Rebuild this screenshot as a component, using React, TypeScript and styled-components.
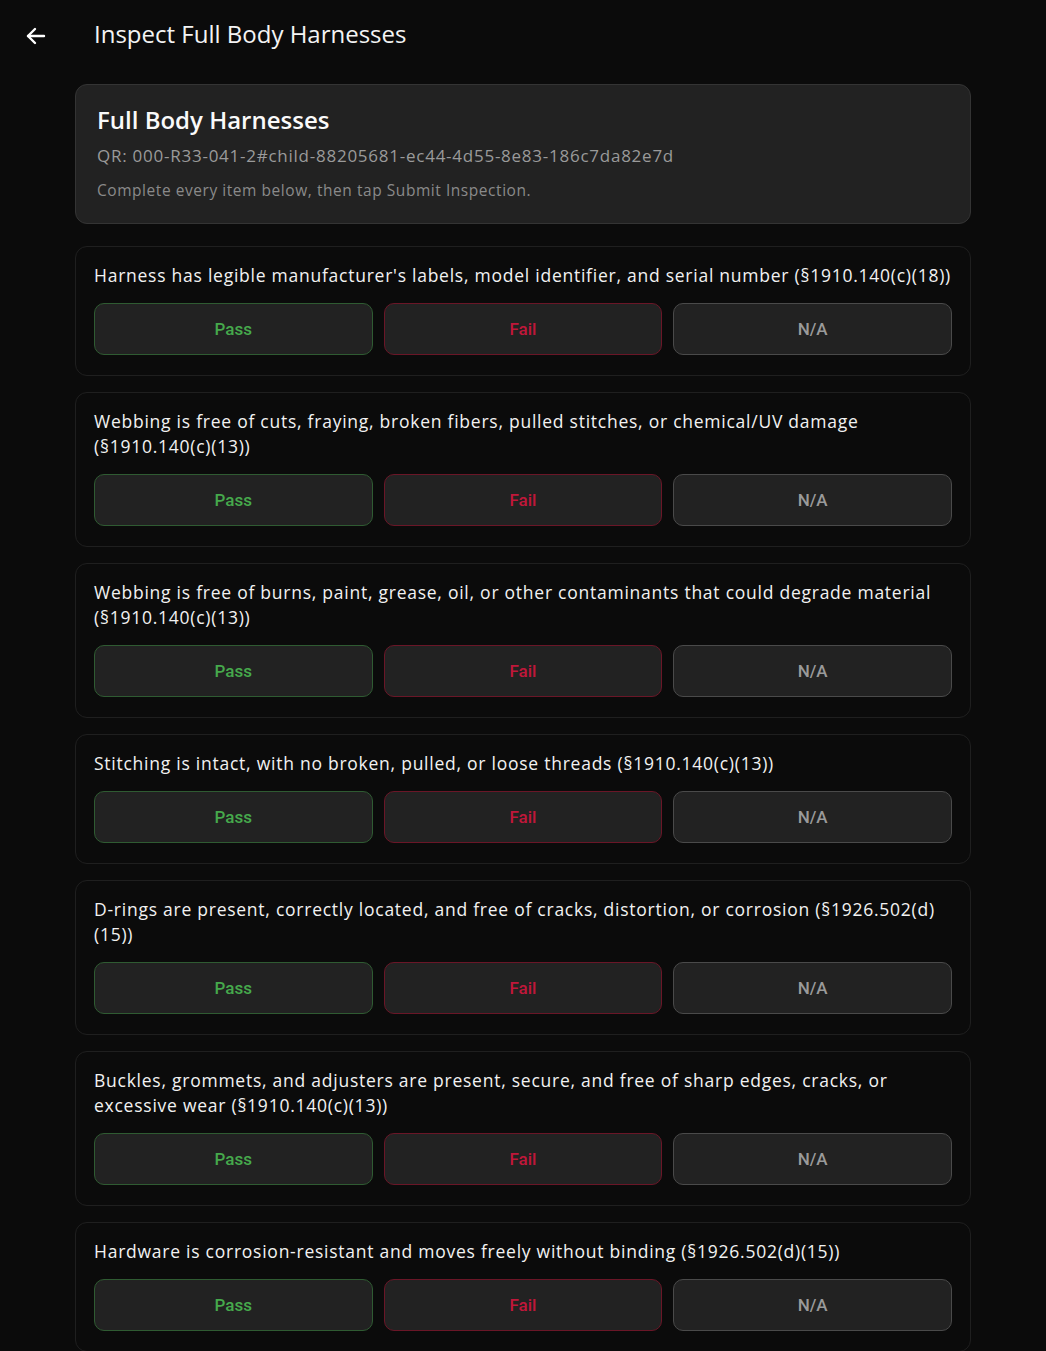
import React, { useState } from "react";
import styled, { createGlobalStyle } from "styled-components";

const GlobalStyle = createGlobalStyle`
  html, body {
    margin: 0;
    padding: 0;
    background: #0b0b0b;
  }
  body {
    font-family: "Open Sans", "Noto Sans", sans-serif;
    color: #f2f2f2;
  }
`;

type Answer = "pass" | "fail" | "na" | null;

const items = [
  "Harness has legible manufacturer's labels, model identifier, and serial number (§1910.140(c)(18))",
  "Webbing is free of cuts, fraying, broken fibers, pulled stitches, or chemical/UV damage (§1910.140(c)(13))",
  "Webbing is free of burns, paint, grease, oil, or other contaminants that could degrade material (§1910.140(c)(13))",
  "Stitching is intact, with no broken, pulled, or loose threads (§1910.140(c)(13))",
  "D-rings are present, correctly located, and free of cracks, distortion, or corrosion (§1926.502(d)(15))",
  "Buckles, grommets, and adjusters are present, secure, and free of sharp edges, cracks, or excessive wear (§1910.140(c)(13))",
  "Hardware is corrosion-resistant and moves freely without binding (§1926.502(d)(15))",
];

const tones = {
  pass: { border: "#2f5b32", color: "#46a94c" },
  fail: { border: "#6a1627", color: "#c0173a" },
  na: { border: "#4a4a4a", color: "#9a9a9a" },
};

export default function App() {
  const [answers, setAnswers] = useState<Answer[]>(items.map(() => null));

  const pick = (i: number, a: Answer) => {
    const next = [...answers];
    next[i] = next[i] === a ? null : a;
    setAnswers(next);
  };

  return (
    <>
      <GlobalStyle />
      <TopBar>
        <BackButton aria-label="Back">
          <svg width="24" height="24" viewBox="0 0 24 24" fill="none" stroke="#fff" strokeWidth="2.4" strokeLinecap="round" strokeLinejoin="round">
            <path d="M20 12H4" />
            <path d="M11 5l-7 7 7 7" />
          </svg>
        </BackButton>
        <PageTitle>Inspect Full Body Harnesses</PageTitle>
      </TopBar>
      <Content>
        <SummaryCard>
          <CardTitle>Full Body Harnesses</CardTitle>
          <QrLine>QR: 000-R33-041-2#child-88205681-ec44-4d55-8e83-186c7da82e7d</QrLine>
          <Hint>Complete every item below, then tap Submit Inspection.</Hint>
        </SummaryCard>
        {items.map((q, i) => (
          <ItemCard key={i}>
            <Question>{q}</Question>
            <ButtonRow>
              <ChoiceButton $tone="pass" $active={answers[i] === "pass"} onClick={() => pick(i, "pass")}>Pass</ChoiceButton>
              <ChoiceButton $tone="fail" $active={answers[i] === "fail"} onClick={() => pick(i, "fail")}>Fail</ChoiceButton>
              <ChoiceButton $tone="na" $active={answers[i] === "na"} onClick={() => pick(i, "na")}>N/A</ChoiceButton>
            </ButtonRow>
          </ItemCard>
        ))}
      </Content>
    </>
  );
}

const TopBar = styled.div`
  display: flex;
  align-items: center;
  height: 68px;
  padding: 0 0 0 24px;
`;

const BackButton = styled.button`
  display: flex;
  align-items: center;
  justify-content: center;
  width: 24px;
  height: 24px;
  padding: 0;
  margin-top: 4px;
  border: none;
  background: none;
  cursor: pointer;
`;

const PageTitle = styled.h1`
  margin: 0 0 2px 46px;
  font-size: 24px;
  font-weight: 400;
  color: #f4f4f4;
`;

const Content = styled.div`
  width: 896px;
  margin: 16px 0 0 75px;
  display: flex;
  flex-direction: column;
  gap: 16px;
`;

const SummaryCard = styled.div`
  background: #222;
  border: 1px solid #343434;
  border-radius: 12px;
  padding: 20px 21px 23px;
  margin-bottom: 6px;
`;

const CardTitle = styled.h2`
  margin: 0;
  font-size: 24px;
  line-height: 30px;
  font-weight: 600;
  color: #fafafa;
`;

const QrLine = styled.div`
  margin-top: 10px;
  font-size: 17px;
  line-height: 22px;
  letter-spacing: 0.75px;
  color: #9a9a9a;
`;

const Hint = styled.div`
  margin-top: 13px;
  font-size: 15.5px;
  line-height: 20px;
  letter-spacing: 0.55px;
  color: #8a8a8a;
`;

const ItemCard = styled.div`
  border: 1px solid #1f1f1f;
  border-radius: 12px;
  padding: 16px 18px 20px;
`;

const Question = styled.div`
  font-size: 17.5px;
  line-height: 25px;
  font-weight: 500;
  letter-spacing: 0.75px;
  color: #f2f2f2;
`;

const ButtonRow = styled.div`
  display: grid;
  grid-template-columns: repeat(3, 1fr);
  gap: 11px;
  margin-top: 15px;
`;

const ChoiceButton = styled.button<{ $tone: keyof typeof tones; $active: boolean }>`
  height: 52px;
  border-radius: 10px;
  border: 1.5px solid ${(p) => tones[p.$tone].border};
  background: ${(p) => (p.$active ? tones[p.$tone].border : "#222")};
  color: ${(p) => (p.$active ? "#fff" : tones[p.$tone].color)};
  font-family: Roboto, "Noto Sans", sans-serif;
  font-size: 17px;
  font-weight: 500;
  cursor: pointer;
`;
